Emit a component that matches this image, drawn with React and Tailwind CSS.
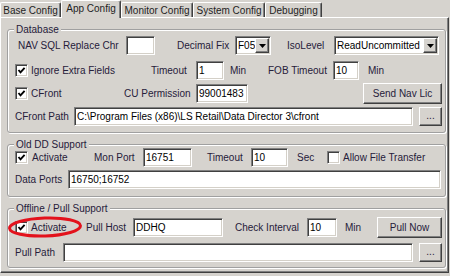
import React from "react";

const LBL = "text-[#26203a]";

function Lbl({ cls = "", children }) {
  return <span className={`shrink-0 whitespace-nowrap leading-[13px] ${LBL} ${cls}`}>{children}</span>;
}

function Input({ cls = "", value = "" }) {
  return (
    <div
      className={`h-[19px] shrink-0 bg-white border border-t-[#808080] border-l-[#808080] border-r-white border-b-white shadow-[inset_1px_1px_0_#404040,inset_-1px_-1px_0_#d4d0c8] pl-[2px] text-black leading-[17px] overflow-hidden whitespace-nowrap ${cls}`}
    >
      {value}
    </div>
  );
}

function Check({ checked, cls = "" }) {
  return (
    <div
      className={`w-[13px] h-[13px] shrink-0 bg-white border border-t-[#808080] border-l-[#808080] border-r-white border-b-white shadow-[inset_1px_1px_0_#404040,inset_-1px_-1px_0_#d4d0c8] flex items-center justify-center ${cls}`}
    >
      {checked && (
        <svg width="9" height="9" viewBox="0 0 9 9">
          <path d="M1.5 4 L3.5 6.3 L7.6 1.8" stroke="#000" strokeWidth="1.9" fill="none" />
        </svg>
      )}
    </div>
  );
}

function Btn({ cls = "", children }) {
  return (
    <div
      className={`shrink-0 flex items-center justify-center bg-[#d6d3ce] border border-t-white border-l-white border-r-[#404040] border-b-[#404040] shadow-[inset_-1px_-1px_0_#808080] leading-[13px] ${LBL} ${cls}`}
    >
      {children}
    </div>
  );
}

function Select({ cls = "", value }) {
  return (
    <div
      className={`h-[19px] shrink-0 flex bg-white border border-t-[#808080] border-l-[#808080] border-r-white border-b-white shadow-[inset_1px_1px_0_#404040,inset_-1px_-1px_0_#d4d0c8] ${cls}`}
    >
      <span className="flex-1 pl-[2px] leading-[17px] text-black whitespace-nowrap overflow-hidden">{value}</span>
      <div className="w-[14px] h-[15px] my-[1px] mr-[1px] shrink-0 bg-[#d6d3ce] border border-t-white border-l-white border-r-[#404040] border-b-[#404040] shadow-[inset_-1px_-1px_0_#808080] flex items-center justify-center">
        <svg width="7" height="4" viewBox="0 0 7 4">
          <path d="M0 0H7L3.5 4Z" fill="#000" />
        </svg>
      </div>
    </div>
  );
}

function Group({ title, cls = "", children }) {
  return (
    <div
      className={`relative ml-[6px] w-[439px] shrink-0 border border-[#a0a0a0] rounded-[3px] shadow-[inset_1px_1px_0_#fff,1px_1px_0_#fff] flex flex-col ${cls}`}
    >
      <div className={`-mt-[7px] ml-[6px] h-[13px] leading-[13px] px-[2px] bg-[#d6d3ce] self-start whitespace-nowrap ${LBL}`}>
        {title}
      </div>
      {children}
    </div>
  );
}

function Tab({ cls = "", children, selected }) {
  return (
    <div
      className={`shrink-0 flex items-center justify-center rounded-t-[2px] bg-[#d6d3ce] border-l border-t border-l-white border-t-white border-r border-r-[#404040] shadow-[inset_-1px_0_0_#808080] leading-[13px] text-[#1e1e1e] whitespace-nowrap ${
        selected ? "relative z-10 h-[18px] -mb-px pb-[2px]" : "h-[15px]"
      } ${cls}`}
    >
      {children}
    </div>
  );
}

export default function App() {
  return (
    <div className="w-[450px] h-[276px] overflow-hidden bg-[#d6d3ce] font-['Liberation_Sans',Arial,sans-serif] text-[10px] flex flex-col">
      {/* Tabs */}
      <div className="h-[17px] flex items-end shrink-0">
        <Tab cls="w-[61px]">Base Config</Tab>
        <Tab cls="w-[60px]" selected>App Config</Tab>
        <Tab cls="w-[72px]">Monitor Config</Tab>
        <Tab cls="w-[72px]">System Config</Tab>
        <Tab cls="w-[57px]">Debugging</Tab>
      </div>

      {/* Panel */}
      <div className="w-[449px] h-[256px] shrink-0 border border-t-white border-l-white border-r-[#404040] border-b-[#404040] shadow-[inset_-1px_-1px_0_#808080] flex flex-col">
        {/* Database */}
        <Group title="Database" cls="mt-[11px] h-[104px]">
          <div className="flex items-center h-[19px]">
            <Lbl cls="ml-[10px] w-[100px]">NAV SQL Replace Chr</Lbl>
            <Input cls="ml-[8px] w-[29px]" />
            <Lbl cls="ml-[22px] w-[57px]">Decimal Fix</Lbl>
            <Select cls="ml-[1px] w-[36px]" value="F05" />
            <Lbl cls="ml-[16px] w-[40px]">IsoLevel</Lbl>
            <Select cls="ml-[7px] w-[105px]" value="ReadUncommitted" />
          </div>
          <div className="flex items-center h-[19px] mt-[6px]">
            <Check checked cls="ml-[7px]" />
            <Lbl cls="ml-[3px] w-[90px]">Ignore Extra Fields</Lbl>
            <Lbl cls="ml-[30px] w-[40px]">Timeout</Lbl>
            <Input cls="ml-[5px] w-[28px]" value="1" />
            <Lbl cls="ml-[6px] w-[20px]">Min</Lbl>
            <Lbl cls="ml-[18px] w-[62px]">FOB Timeout</Lbl>
            <Input cls="ml-[3px] w-[26px]" value="10" />
            <Lbl cls="ml-[9px]">Min</Lbl>
          </div>
          <div className="flex items-center h-[22px] mt-[2px]">
            <Check checked cls="ml-[7px]" />
            <Lbl cls="ml-[3px] w-[40px]">CFront</Lbl>
            <Lbl cls="ml-[53px] w-[70px]">CU Permission</Lbl>
            <Input cls="ml-[2px] w-[52px]" value="99001483" />
            <Btn cls="ml-[115px] w-[79px] h-[21px]">Send Nav Lic</Btn>
          </div>
          <div className="flex items-center h-[19px] mt-[3px]">
            <Lbl cls="ml-[7px] w-[56px]">CFront Path</Lbl>
            <Input cls="ml-[3px] w-[339px]" value="C:\Program Files (x86)\LS Retail\Data Director 3\cfront" />
            <Btn cls="ml-[6px] w-[23px] h-[19px] items-end pb-[3px]">...</Btn>
          </div>
        </Group>

        {/* Old DD Support */}
        <Group title="Old DD Support" cls="mt-[11px] h-[53px]">
          <div className="flex items-center h-[19px] -mt-[3px]">
            <Check checked cls="ml-[7px]" />
            <Lbl cls="ml-[4px] w-[40px]">Activate</Lbl>
            <Lbl cls="ml-[22px] w-[44px]">Mon Port</Lbl>
            <Input cls="ml-[5px] w-[49px]" value="16751" />
            <Lbl cls="ml-[15px] w-[40px]">Timeout</Lbl>
            <Input cls="ml-[4px] w-[37px]" value="10" />
            <Lbl cls="ml-[9px] w-[20px]">Sec</Lbl>
            <Check cls="ml-[10px]" />
            <Lbl cls="ml-[3px]">Allow File Transfer</Lbl>
          </div>
          <div className="flex items-center h-[19px] mt-[3px]">
            <Lbl cls="ml-[7px] w-[50px]">Data Ports</Lbl>
            <Input cls="ml-[3px] w-[373px]" value="16750;16752" />
          </div>
        </Group>

        {/* Offline / Pull Support */}
        <Group title="Offline / Pull Support" cls="mt-[11px] h-[60px]">
          <div className="flex items-center h-[21px] mt-[2px]">
            <Check checked cls="ml-[7px]" />
            <Lbl cls="ml-[3px] w-[42px]">Activate</Lbl>
            <Lbl cls="ml-[13px] w-[44px]">Pull Host</Lbl>
            <Input cls="ml-[3px] w-[90px]" value="DDHQ" />
            <Lbl cls="ml-[12px] w-[68px]">Check Interval</Lbl>
            <Input cls="ml-[4px] w-[30px]" value="10" />
            <Lbl cls="ml-[8px] w-[22px]">Min</Lbl>
            <Btn cls="ml-[10px] w-[65px] h-[21px]">Pull Now</Btn>
          </div>
          <div className="flex items-center h-[19px] mt-[5px]">
            <Lbl cls="ml-[7px] w-[46px]">Pull Path</Lbl>
            <Input cls="ml-[2px] w-[350px]" />
            <Btn cls="ml-[6px] w-[23px] h-[19px] items-end pb-[3px]">...</Btn>
          </div>
          <svg
            className="absolute left-[-3px] top-[5px] pointer-events-none"
            width="80"
            height="26"
            viewBox="0 0 80 26"
          >
            <ellipse
              cx="40"
              cy="13"
              rx="35.5"
              ry="9"
              fill="none"
              stroke="#e3121c"
              strokeWidth="3"
              transform="rotate(-2 40 13)"
            />
          </svg>
        </Group>
      </div>
    </div>
  );
}
